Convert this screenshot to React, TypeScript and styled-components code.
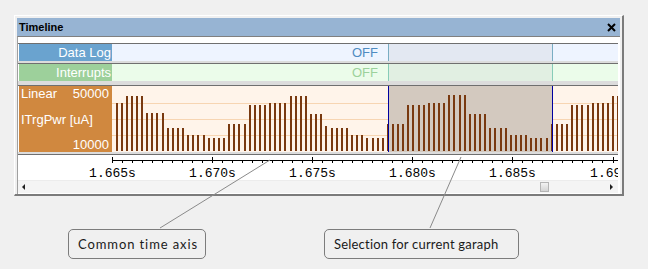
import styled, { createGlobalStyle } from "styled-components";

const GlobalStyle = createGlobalStyle`
  body {
    margin: 0;
    background: #f0f0f0;
    font-family: "Liberation Sans", Arial, sans-serif;
  }
`;

// [bar count, top y in page px] for the ITrgPwr samples
const GROUPS: [number, number][] = [
  [2, 103], [4, 96], [4, 113], [4, 128], [4, 135], [4, 138], [4, 124], [4, 105],
  [4, 103], [4, 96], [3, 114], [1, 126], [4, 128], [3, 135], [4, 138], [4, 124],
  [4, 105], [4, 103], [4, 95], [4, 114], [4, 128], [4, 135], [4, 138], [4, 124],
  [4, 105], [4, 103], [2, 96],
];

const BARS = GROUPS.flatMap(([n, top]) => Array.from({ length: n }, () => top)).map(
  (top, i) => ({ x: Math.round(115.5 + i * 5.12) - 112, y: top - 86, h: 151 - top })
);

const CHART_W = 506;
const CHART_H = 66;
const SEL_LEFT = 276;
const SEL_RIGHT = 440;

const TICKS = ["1.665s", "1.670s", "1.675s", "1.680s", "1.685s", "1.690s"];

const Timeline = () => (
  <Window>
    <TitleBar>
      <Title>Timeline</Title>
      <svg width="9" height="9" viewBox="0 0 9 9">
        <path d="M1 1 L8 8 M8 1 L1 8" stroke="#000" strokeWidth="2" />
      </svg>
    </TitleBar>

    <Panel>
      <Row $band={2}>
        <Label $bg="#6aa3cf">Data Log</Label>
        <Track $bg="#eef4ff">
          <StateText $color="#4f8bc1">OFF</StateText>
          <Selection $bg="#e3e8f2" $line="#79adc3" />
        </Track>
      </Row>

      <Row $band={4}>
        <Label $bg="#9dd09b">Interrupts</Label>
        <Track $bg="#ebfcea">
          <StateText $color="#9cd29c">OFF</StateText>
          <Selection $bg="#e1efe2" $line="#87ccb8" />
        </Track>
      </Row>

      <Row $band={2}>
        <ScaleLabel>
          <ScaleLine>
            <span>Linear</span>
            <span>50000</span>
          </ScaleLine>
          <ScaleLine>
            <span>ITrgPwr [uA]</span>
          </ScaleLine>
          <ScaleLine>
            <span />
            <span>10000</span>
          </ScaleLine>
        </ScaleLabel>
        <Track $bg="#fff4ea" $height={CHART_H}>
          <svg width={CHART_W} height={CHART_H}>
            {[17, 33, 49].map((y) => (
              <rect key={y} x={0} y={y} width={CHART_W} height={1} fill="#f7d5b2" />
            ))}
            <rect x={SEL_LEFT} y={0} width={SEL_RIGHT - SEL_LEFT + 1} height={CHART_H} fill="#d3c9bf" />
            {BARS.map((b, i) => (
              <rect key={i} x={b.x} y={b.y} width={2} height={b.h} fill="#793910" />
            ))}
            <rect x={SEL_LEFT} y={0} width={1} height={CHART_H} fill="#0000a0" />
            <rect x={SEL_RIGHT} y={0} width={1} height={CHART_H} fill="#0000a0" />
          </svg>
        </Track>
      </Row>

      <Axis>
        <svg width={600} height={25}>
          <rect x={94} y={5} width={506} height={1} fill="#000" />
          {Array.from({ length: 51 }, (_, i) => {
            const x = Math.round(94 + i * 10.01);
            const major = i % 10 === 0;
            return (
              <rect key={i} x={x} y={major ? 2 : 5} width={1} height={major ? 6 : 3} fill="#000" />
            );
          })}
          {TICKS.map((t, k) => (
            <text
              key={t}
              x={Math.round(94 + k * 100.1) + 0.5}
              y={22}
              textAnchor="middle"
              fontFamily="'Liberation Mono', monospace"
              fontSize="13"
              fill="#000"
            >
              {t}
            </text>
          ))}
        </svg>
      </Axis>

      <ScrollBar>
        <svg width="12" height="12" viewBox="0 0 12 12">
          <path d="M7 3 L4 6 L7 9 Z" fill="#202020" />
        </svg>
        <ScrollTrack>
          <Thumb $offset={510} />
        </ScrollTrack>
        <svg width="12" height="12" viewBox="0 0 12 12">
          <path d="M4 3 L7 6 L4 9 Z" fill="#202020" />
        </svg>
      </ScrollBar>
    </Panel>
  </Window>
);

const App = () => (
  <Page>
    <GlobalStyle />
    <Timeline />

    <CalloutRow>
      <Callout $width={138} $spacing={0.9}>
        Common time axis
      </Callout>
      <Callout $width={195} $spacing={0.2}>
        Selection for current garaph
      </Callout>
    </CalloutRow>

    <Leaders width="648" height="269">
      <line x1="160" y1="228" x2="270" y2="160" stroke="#8a8a8a" strokeWidth="1" />
      <line x1="430" y1="228" x2="461" y2="157" stroke="#8a8a8a" strokeWidth="1" />
    </Leaders>
  </Page>
);

const Page = styled.div`
  position: relative;
  width: 648px;
  height: 269px;
  padding: 15px 0 0 14px;
  box-sizing: border-box;
  overflow: hidden;
`;

const Window = styled.div`
  width: 610px;
  box-sizing: border-box;
  border-top: 1px solid #ffffff;
  border-left: 1px solid #ffffff;
  border-right: 2px solid #7b7b7b;
  border-bottom: 2px solid #7b7b7b;
  padding: 2px 2px 0 2px;
  background: #f0f0f0;
`;

const TitleBar = styled.div`
  height: 18px;
  display: flex;
  align-items: center;
  justify-content: space-between;
  padding: 0 4px 0 2px;
  background: #97b4d3;
`;

const Title = styled.span`
  font-size: 11px;
  font-weight: bold;
  color: #000;
`;

const Panel = styled.div`
  border-top: 1px solid #808080;
  border-left: 1px solid #a0a0a0;
  padding: 6px 2px 1px 0;
  background: #ffffff;
`;

const Row = styled.div<{ $band: number }>`
  display: flex;
  padding-left: 1px;
  border-top: 1px solid #6f6f6f;
  border-bottom: ${({ $band }) => $band}px solid #dcdcdc;
`;

const Label = styled.div<{ $bg: string }>`
  width: 93px;
  box-sizing: border-box;
  padding-right: 1px;
  background: ${({ $bg }) => $bg};
  color: #ffffff;
  font-size: 13px;
  text-align: right;
  line-height: 17px;
`;

const ScaleLabel = styled.div`
  width: 93px;
  box-sizing: border-box;
  padding: 1px 3px 0 2px;
  display: flex;
  flex-direction: column;
  justify-content: space-between;
  background: #d0883f;
  color: #ffffff;
  font-size: 13px;
  line-height: 14px;
`;

const ScaleLine = styled.div`
  display: flex;
  justify-content: space-between;
`;

const Track = styled.div<{ $bg: string; $height?: number }>`
  position: relative;
  width: ${CHART_W}px;
  height: ${({ $height }) => ($height ? `${$height}px` : "auto")};
  background: ${({ $bg }) => $bg};
  display: flex;
  justify-content: center;
  align-items: center;

  svg {
    display: block;
  }
`;

const StateText = styled.span<{ $color: string }>`
  font-size: 13px;
  color: ${({ $color }) => $color};
`;

const Selection = styled.div<{ $bg: string; $line: string }>`
  position: absolute;
  top: 0;
  bottom: 0;
  left: ${SEL_LEFT}px;
  width: ${SEL_RIGHT - SEL_LEFT - 1}px;
  background: ${({ $bg }) => $bg};
  border-left: 1px solid ${({ $line }) => $line};
  border-right: 1px solid ${({ $line }) => $line};
`;

const Axis = styled.div`
  width: 600px;
  border-top: 1px solid #6f6f6f;
  overflow: hidden;

  svg {
    display: block;
  }
`;

const ScrollBar = styled.div`
  width: 600px;
  height: 12px;
  display: flex;
  align-items: center;
  background: #f4f4f4;
  border-top: 1px solid #ececec;

  svg {
    display: block;
    flex: none;
  }
`;

const ScrollTrack = styled.div`
  flex: 1;
  height: 12px;
  display: flex;
  align-items: center;
`;

const Thumb = styled.div<{ $offset: number }>`
  margin-left: ${({ $offset }) => $offset}px;
  width: 9px;
  height: 10px;
  box-sizing: border-box;
  border: 1px solid #b4b4b4;
  background: linear-gradient(#f2f2f2, #d4d4d4);
`;

const CalloutRow = styled.div`
  display: flex;
  gap: 118px;
  margin-top: 33px;
  padding-left: 54px;
`;

const Callout = styled.div<{ $width: number; $spacing: number }>`
  width: ${({ $width }) => $width}px;
  height: 30px;
  box-sizing: border-box;
  border: 1px solid #7c7c7c;
  border-radius: 5px;
  display: flex;
  align-items: center;
  padding-left: 9px;
  font-family: Lato, "Liberation Sans", sans-serif;
  font-size: 13px;
  letter-spacing: ${({ $spacing }) => $spacing}px;
  color: #1a1a1a;
`;

const Leaders = styled.svg`
  position: absolute;
  left: 0;
  top: 0;
  pointer-events: none;
`;

export default App;
